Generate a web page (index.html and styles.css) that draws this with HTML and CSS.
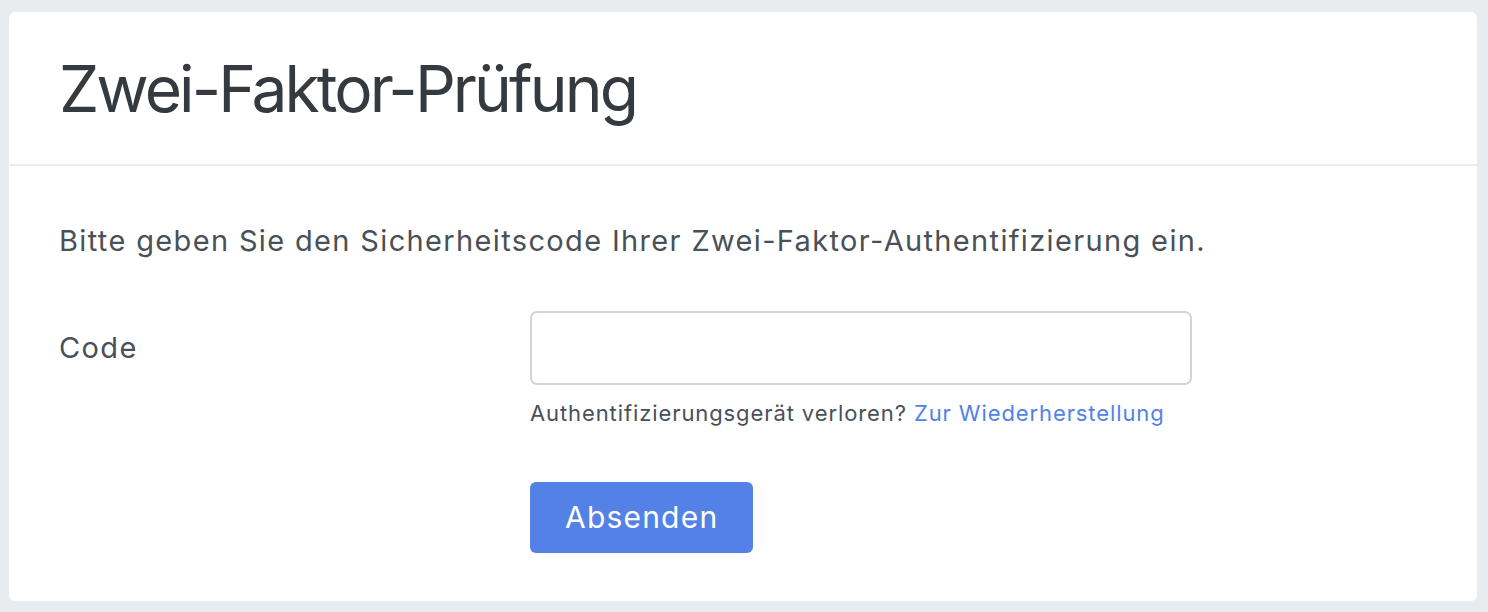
FILE: index.html
```html
<!DOCTYPE html>
<html>
<head><meta http-equiv="Content-Type" content="text/html; charset=UTF-8">
<meta name="viewport" content="width=device-width">
<title>Zwei-Faktor-Prüfung</title>
<link rel="stylesheet" href="styles.css">
</head>
<body>
<div class="card">
    <div class="card-header">
        <h1 class="card-title">Zwei-Faktor-Prüfung</h1>
    </div>
    <div class="card-body">
        <p class="intro">Bitte geben Sie den Sicherheitscode Ihrer Zwei-Faktor-Authentifizierung ein.</p>
        <form class="form-grid" action="#">
            <label class="form-label" for="code">Code</label>
            <div class="form-field">
                <input id="code" class="form-input" type="text" autocomplete="one-time-code">
                <div class="form-help">Authentifizierungsgerät verloren? <a href="#">Zur Wiederherstellung</a></div>
            </div>
            <div class="form-actions">
                <button class="btn" type="submit">Absenden</button>
            </div>
        </form>
    </div>
</div>
</body></html>
```

FILE: styles.css
```css
html, body {
    margin: 0;
    height: 100%;
}
body {
    background-color: #e9ecef;
    padding: 12px 11px 11px 9px;
    box-sizing: border-box;
    font-family: Inter, "Noto Sans", sans-serif;
    color: #495057;
}
.card {
    background-color: #fff;
    border-radius: 6px;
}
.card-header {
    padding: 39px 50px 36px;
    border-bottom: 2px solid #e9ecef;
}
.card-title {
    margin: 0;
    font-size: 64px;
    font-weight: 400;
    line-height: 1.2;
    letter-spacing: -2.9px;
    color: #343a40;
}
.card-body {
    padding: 55px 50px 48px;
}
.intro {
    margin: 0 0 50px;
    font-size: 29px;
    line-height: 40px;
    letter-spacing: 1.35px;
}
.form-grid {
    display: grid;
    grid-template-columns: 471px 662px;
}
.form-label {
    font-size: 29px;
    line-height: 74px;
    letter-spacing: 1.35px;
}
.form-input {
    display: block;
    width: 100%;
    height: 74px;
    box-sizing: border-box;
    border: 2px solid #ced4da;
    border-radius: 7px;
    padding: 0 20px;
    font: inherit;
    font-size: 29px;
}
.form-help {
    margin-top: 13px;
    font-size: 22px;
    line-height: 30px;
    letter-spacing: 0.9px;
}
.form-help a {
    color: #5282e6;
    text-decoration: none;
}
.form-actions {
    grid-column: 2;
    margin-top: 54px;
}
.btn {
    height: 71px;
    padding: 0 35px;
    border: 0;
    border-radius: 6px;
    background-color: #5481e6;
    color: #fff;
    font: inherit;
    font-size: 30px;
    letter-spacing: 1.2px;
}
```
